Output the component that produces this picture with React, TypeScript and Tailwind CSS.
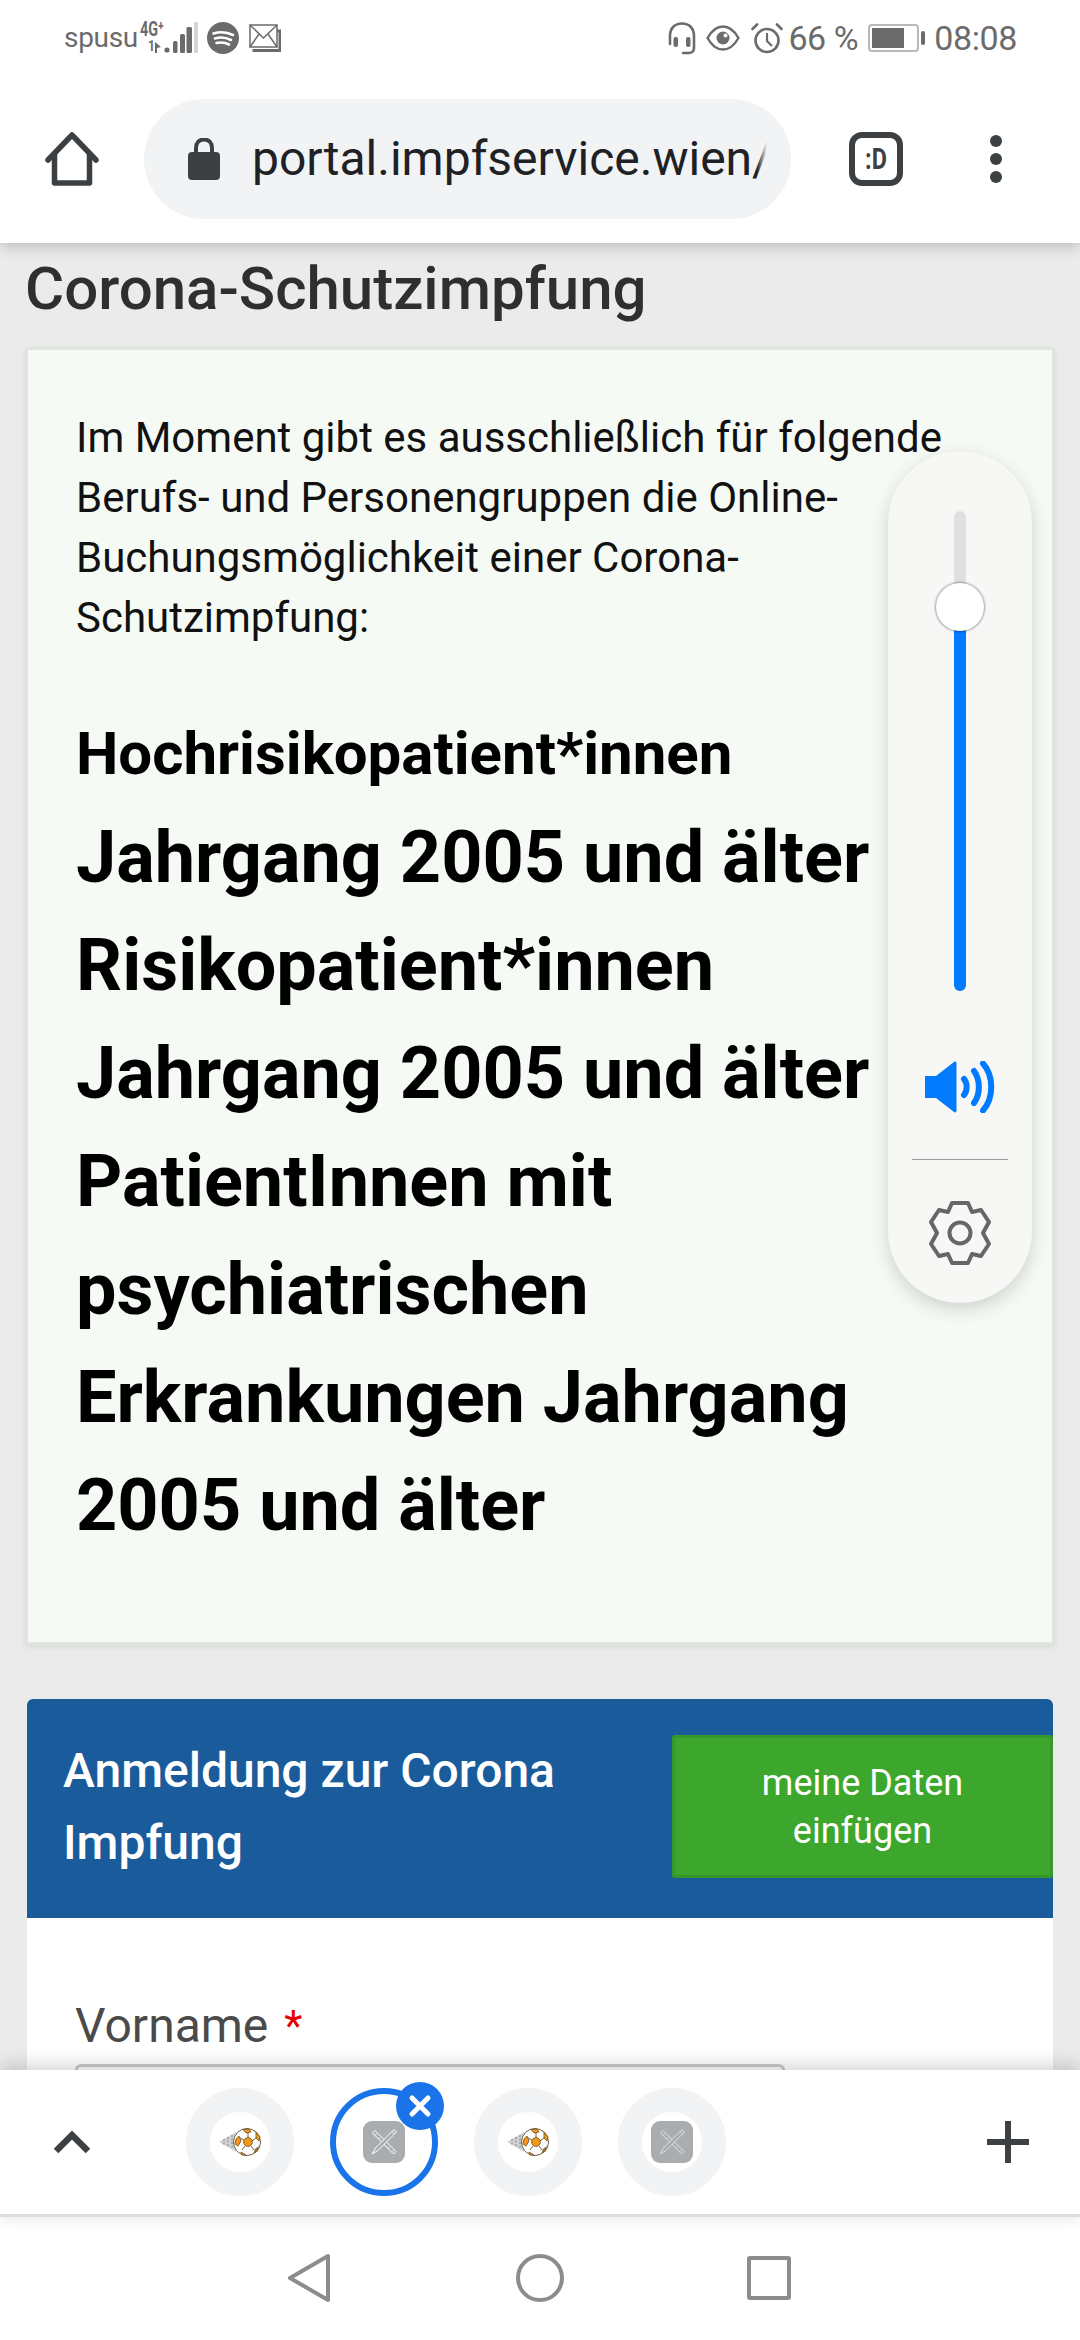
function SoccerBall() {
  return (
    <svg width="44" height="28" viewBox="0 0 44 28">
      <path d="M1 14 L18 4 L18 24 Z" fill="#d2d2d2" />
      <path d="M6 11 L6 17 M10 9 L10 19 M14 7 L14 21" stroke="#9a9a9a" strokeWidth="1.5" strokeDasharray="2 1.5" />
      <circle cx="29" cy="14" r="13.5" fill="#fff" stroke="#6b5a45" strokeWidth="1" />
      <circle cx="30" cy="14" r="4.4" fill="#f29a12" stroke="#6b4a20" strokeWidth="0.8" />
      <path d="M25 1.5 L31 1 L33 4 L28 5 Z" fill="#f29a12" stroke="#6b4a20" strokeWidth="0.8" />
      <path d="M38 4 L42 9 L41 13 L38 10 Z" fill="#f29a12" stroke="#6b4a20" strokeWidth="0.8" />
      <path d="M18 11 L21 8 L23 13 L20 18 L17 16 Z" fill="#f29a12" stroke="#6b4a20" strokeWidth="0.8" />
      <path d="M37 21 L41 18 L40 23 L35 26 Z" fill="#8a6a30" />
      <path d="M23 24 L28 27 L24 27 Z" fill="#f29a12" stroke="#6b4a20" strokeWidth="0.8" />
      <path d="M30 9.5 L30 5 M34 13 L38 10 M33 18 L36 22 M27 18 L24 22 M26 12 L22 10" stroke="#6b4a20" strokeWidth="0.9" />
    </svg>
  );
}

function ToolsIcon({ stroke }: { stroke: string }) {
  return (
    <div className="flex h-[42px] w-[42px] items-center justify-center rounded-[9px] bg-[#a9adb0]">
      <svg width="30" height="30" viewBox="0 0 30 30" fill="none" stroke={stroke} strokeWidth="1">
        <path d="M3.5 6 L6 3.5 L27 24.5 L24.5 27 Z" />
        <path d="M6 8.5 L8 6.5 M9.5 12 L11 10.5 M19 21.5 L20.5 20 M22.5 25 L24 23.5" />
        <path d="M25 2.5 L27.5 5 L9 23.5 L3 27 L6.5 21 Z" fill="#a9adb0" />
        <path d="M23 4.5 L25.5 7" />
      </svg>
    </div>
  );
}

function Tab({ kind, active }: { kind: "ball" | "tools"; active?: boolean }) {
  if (active) {
    return (
      <div className="relative flex h-[108px] w-[108px] items-center justify-center rounded-full border-[6px] border-[#1a73e8] bg-white">
        <ToolsIcon stroke="#ffffff" />
        <div className="absolute right-[-12px] top-[-12px] flex h-[48px] w-[48px] items-center justify-center rounded-full bg-[#1a73e8]">
          <svg width="24" height="24" viewBox="0 0 24 24" stroke="#fff" strokeWidth="5" strokeLinecap="round">
            <path d="M4 4 L20 20 M20 4 L4 20" />
          </svg>
        </div>
      </div>
    );
  }
  return (
    <div className="flex h-[108px] w-[108px] items-center justify-center rounded-full border-[24px] border-[#f1f3f4] bg-white">
      <div className="shrink-0">{kind === "ball" ? <SoccerBall /> : <ToolsIcon stroke="#dfe1e2" />}</div>
    </div>
  );
}

function StatusBar() {
  return (
    <div className="flex h-[75px] items-center justify-between pl-[64px] pr-[63px] pt-[1px] text-[#6b6b6b]">
      <div className="flex items-center">
        <span className="text-[28px] leading-none pb-[1px] tracking-[-0.3px]">spusu</span>
        <div className="relative ml-[5px] h-[32px] w-[56px]">
          <span className="absolute left-[-3px] top-[-3px] origin-left scale-x-[0.72] text-[20px] font-bold leading-[20px]">4G⁺</span>
          <span className="absolute left-[5px] top-[15px] origin-left scale-x-[0.8] text-[15px] font-bold leading-[18px]">1</span>
          <svg className="absolute left-0 top-0" width="56" height="32" viewBox="0 0 56 32" fill="#6b6b6b">
            <path d="M12 20 L12 31 L14 31 L14 26 L18 25 Z" />
            <circle cx="24" cy="28" r="2.6" />
            <rect x="30" y="19" width="4.5" height="12" rx="1.5" />
            <rect x="37" y="12" width="5" height="19" rx="1.5" />
            <rect x="43.5" y="5" width="5.5" height="26" rx="1.5" />
            <rect x="51" y="0" width="4" height="31" rx="1" fill="#d5d5d5" />
          </svg>
        </div>
        <svg className="ml-[8px]" width="32" height="32" viewBox="0 0 32 32" fill="none">
          <circle cx="16" cy="16" r="16" fill="#6b6b6b" />
          <path d="M6.5 11.5 C13 9.5 20 10 26 13 M8 16.5 C13 15 19 15.5 24 18 M9.5 21 C14 20 18.5 20.5 22 22.5" stroke="#fff" strokeWidth="2.6" strokeLinecap="round" />
        </svg>
        <svg className="ml-[10px]" width="32" height="28" viewBox="0 0 32 28" fill="none" stroke="#6b6b6b">
          <path d="M5 25 L5 26.5 L31 26.5 L31 7 L28 7" strokeWidth="3" />
          <rect x="1" y="1" width="27" height="22" fill="#fff" strokeWidth="1.5" />
          <path d="M1 1 L14.5 14 L28 1 M1 23 L10 10 M28 23 L19 10" strokeWidth="1.5" />
        </svg>
      </div>
      <div className="flex items-center">
        <svg width="30" height="33" viewBox="0 0 30 33" fill="none" stroke="#6b6b6b" strokeWidth="2.6">
          <path d="M3 22 L3 14 C3 6 8 1.5 15 1.5 C22 1.5 27 6 27 14 L27 26 C27 29 25 31 22 31 L16 31" strokeLinecap="round" />
          <rect x="6.5" y="15" width="4.5" height="10" rx="2" fill="#6b6b6b" stroke="none" />
          <rect x="19" y="15" width="4.5" height="10" rx="2" fill="#6b6b6b" stroke="none" />
        </svg>
        <svg className="ml-[9px]" width="34" height="26" viewBox="0 0 34 26" fill="none" stroke="#6b6b6b" strokeWidth="2.4">
          <path d="M1.5 13 C6 5 11 1.5 17 1.5 C23 1.5 28 5 32.5 13 C28 21 23 24.5 17 24.5 C11 24.5 6 21 1.5 13 Z" />
          <circle cx="17" cy="13" r="6.5" fill="#6b6b6b" stroke="none" />
          <circle cx="19.5" cy="10.5" r="2" fill="#fff" stroke="none" />
        </svg>
        <svg className="ml-[11px]" width="32" height="31" viewBox="0 0 32 31" fill="none" stroke="#6b6b6b" strokeWidth="2.6">
          <circle cx="16" cy="17.5" r="11.5" />
          <path d="M16 10 L16 18 L21 23" strokeWidth="2.2" />
          <path d="M1.5 6 L6 1.5 M30.5 6 L26 1.5" strokeLinecap="round" />
        </svg>
        <span className="ml-[5px] text-[34px] leading-none tracking-[-0.4px]">66 %</span>
        <div className="ml-[10px] flex items-center">
          <div className="h-[28px] w-[51px] rounded-[4px] border-2 border-[#b9b9b9] p-[2px]">
            <div className="h-full w-[32px] bg-[#6b6b6b]" />
          </div>
          <div className="ml-[2px] h-[14px] w-[4px] rounded-[2px] bg-[#6b6b6b]" />
        </div>
        <span className="ml-[9px] text-[34px] leading-none tracking-[-0.4px]">08:08</span>
      </div>
    </div>
  );
}

function BrowserBar() {
  return (
    <div className="relative z-10 h-[243px] bg-white shadow-[0_3px_14px_rgba(0,0,0,0.22)]">
      <StatusBar />
      <div className="flex items-center pt-[24px]">
        <svg className="ml-[45px]" width="54" height="54" viewBox="0 0 54 54" fill="none" stroke="#3c4043" strokeWidth="5.5" strokeLinejoin="round" strokeLinecap="round">
          <path d="M3 28 L27 3 L51 28" />
          <path d="M9.5 22 L9.5 51 L44.5 51 L44.5 22" />
        </svg>
        <div className="relative ml-[45px] flex h-[120px] w-[647px] items-center overflow-hidden rounded-full bg-[#f1f3f4] pl-[44px]">
          <svg className="shrink-0" width="32" height="42" viewBox="0 0 32 42" fill="#3c4043">
            <path d="M8 17 L8 10 C8 5 11 1.5 16 1.5 C21 1.5 24 5 24 10 L24 17" fill="none" stroke="#3c4043" strokeWidth="4" />
            <rect x="0" y="14" width="32" height="28" rx="4" />
          </svg>
          <span className="ml-[32px] whitespace-nowrap text-[48px] leading-none text-[#202124]">portal.impfservice.wien/</span>
          <div className="absolute inset-y-0 right-[24px] w-[10px] bg-gradient-to-r from-transparent to-[#f1f3f4]" />
          <div className="absolute inset-y-0 right-0 w-[24px] bg-[#f1f3f4]" />
        </div>
        <div className="ml-[58px] flex h-[54px] w-[54px] items-center justify-center rounded-[13px] border-[6px] border-[#3c4043]">
          <span className="scale-x-[0.78] text-[30px] font-bold leading-none text-[#3c4043]">:D</span>
        </div>
        <div className="ml-[87px] flex flex-col gap-[6px]">
          <div className="h-[12px] w-[12px] rounded-full bg-[#3c4043]" />
          <div className="h-[12px] w-[12px] rounded-full bg-[#3c4043]" />
          <div className="h-[12px] w-[12px] rounded-full bg-[#3c4043]" />
        </div>
      </div>
    </div>
  );
}

function VolumePanel() {
  return (
    <div className="absolute left-[888px] top-[451px] z-20 flex h-[852px] w-[144px] flex-col items-center rounded-full bg-[#f7f7f6] shadow-[0_6px_18px_rgba(0,0,0,0.16)]">
      <div className="relative mt-[60px] h-[480px] w-[12px] rounded-full bg-[#e0e0e0]">
        <div className="absolute inset-x-0 bottom-0 h-[384px] rounded-full bg-[#007aff]" />
        <div className="absolute left-[-18px] top-[72px] h-[48px] w-[48px] rounded-full bg-white shadow-[0_0_2px_1px_rgba(0,0,0,0.35)]" />
      </div>
      <svg className="mt-[70px]" width="70" height="52" viewBox="0 0 70 52" fill="none">
        <path d="M0 15 L11 15 L29 1 C30.5 0 31.5 1 31.5 2.5 L31.5 49.5 C31.5 51 30.5 52 29 51 L11 37 L0 37 Z" fill="#007aff" />
        <path d="M39 18 C42.5 22 42.5 30 39 34" stroke="#007aff" strokeWidth="6" strokeLinecap="round" />
        <path d="M49 10 C55.5 19 55.5 33 49 42" stroke="#007aff" strokeWidth="6" strokeLinecap="round" />
        <path d="M58 2.5 C69 15 69 37 58 49.5" stroke="#007aff" strokeWidth="6" strokeLinecap="round" />
      </svg>
      <div className="mt-[46px] h-[1px] w-[96px] bg-[#9a9a9a]" />
      <svg className="mt-[40px]" width="64" height="66" viewBox="0 0 64 66" fill="none" stroke="#666666" strokeWidth="4" strokeLinejoin="round">
        <path d="M24 3 L40 3 L44 12 L53 10 L61 22 L55 33 L61 44 L53 56 L44 54 L40 63 L24 63 L20 54 L11 56 L3 44 L9 33 L3 22 L11 10 L20 12 Z" />
        <circle cx="32" cy="33" r="10.5" />
      </svg>
    </div>
  );
}

function TabStrip() {
  return (
    <div className="relative z-10 flex h-[147px] shrink-0 items-start border-b-[3px] border-[#dcdce0] bg-white pt-[18px] shadow-[0_-4px_18px_rgba(0,0,0,0.18)]">
      <div className="flex h-[108px] w-[186px] shrink-0 items-center pl-[54px]">
        <svg width="36" height="24" viewBox="0 0 36 24" fill="none" stroke="#3c4043" strokeWidth="6.5">
          <path d="M2 21 L18 5 L34 21" />
        </svg>
      </div>
      <div className="flex gap-[36px]">
        <Tab kind="ball" />
        <Tab kind="tools" active />
        <Tab kind="ball" />
        <Tab kind="tools" />
      </div>
      <div className="flex h-[108px] flex-1 items-center justify-end pr-[51px]">
        <svg width="42" height="42" viewBox="0 0 42 42" fill="#3c4043">
          <rect x="18" y="0" width="6" height="42" />
          <rect x="0" y="18" width="42" height="6" />
        </svg>
      </div>
    </div>
  );
}

function NavBar() {
  return (
    <div className="flex h-[123px] shrink-0 items-center bg-white pb-[2px]">
      <svg className="ml-[287px]" width="44" height="50" viewBox="0 0 44 50" fill="none" stroke="#8c8c8c" strokeWidth="4" strokeLinejoin="round">
        <path d="M41 3 L41 47 L3 25 Z" />
      </svg>
      <div className="ml-[185px] h-[48px] w-[48px] rounded-full border-4 border-[#8c8c8c]" />
      <div className="ml-[183px] h-[44px] w-[44px] rounded-[3px] border-4 border-[#8c8c8c]" />
    </div>
  );
}

export default function App() {
  return (
    <div className="relative flex h-[2340px] w-[1080px] flex-col overflow-hidden bg-[#ebebeb] font-['Roboto',sans-serif]">
      <BrowserBar />
      <main className="min-h-0 flex-1 overflow-hidden px-[25px]">
        <h1 className="mt-[14px] text-[60px] font-medium leading-[64px] text-[#2f2f2f]">Corona-Schutzimpfung</h1>
        <section className="mt-[26px] h-[1298px] rounded-[4px] border-[3px] border-[#dfe6df] bg-[#f5faf5] px-[48px] pt-[58px] shadow-[0_2px_6px_rgba(0,0,0,0.08)]">
          <p className="text-[42px] leading-[60px] text-[#111111]">
            Im Moment gibt es ausschließlich für folgende<br />
            Berufs- und Personengruppen die Online-<br />
            Buchungsmöglichkeit einer Corona-<br />
            Schutzimpfung:
          </p>
          <h3 className="mt-[56px] text-[60px] font-bold leading-[100px] text-black">Hochrisikopatient*innen</h3>
          <h2 className="text-[72px] font-bold leading-[108px] text-black">
            Jahrgang 2005 und älter<br />
            Risikopatient*innen<br />
            Jahrgang 2005 und älter<br />
            PatientInnen mit<br />
            psychiatrischen<br />
            Erkrankungen Jahrgang<br />
            2005 und älter
          </h2>
        </section>
        <section className="mx-[2px] mt-[54px] rounded-t-[6px] bg-white">
          <div className="flex h-[219px] items-start justify-between rounded-t-[6px] bg-[#195b9b] pl-[36px] pt-[36px]">
            <h2 className="w-[520px] text-[48px] font-medium leading-[72px] text-white">Anmeldung zur Corona Impfung</h2>
            <div className="flex h-[143px] w-[381px] items-center justify-center rounded-[3px] border-[3px] border-[#37982a] bg-[#3ca72c] text-center text-[36px] leading-[48px] text-white">
              meine Daten<br />einfügen
            </div>
          </div>
          <div className="px-[48px] pt-[80px]">
            <label className="block text-[48px] leading-[56px] text-[#4a4a4a]">
              Vorname <span className="relative top-[-2px] ml-[4px] text-[42px] text-[#e60000]">*</span>
            </label>
            <div className="mt-[8px] h-[60px] w-[710px] rounded-[6px] border-[3px] border-[#c9c9c9] bg-white" />
          </div>
        </section>
      </main>
      <VolumePanel />
      <TabStrip />
      <NavBar />
    </div>
  );
}
